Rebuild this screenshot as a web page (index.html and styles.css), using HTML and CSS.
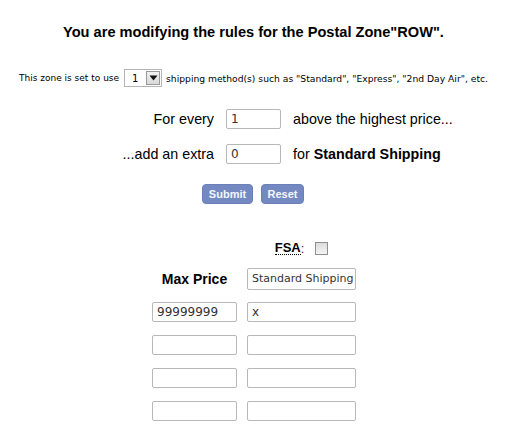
FILE: index.html
```html
<!DOCTYPE html>
<html>
<head>
<meta charset="utf-8">
<link rel="stylesheet" href="styles.css">
</head>
<body>
<h3 class="title">You are modifying the rules for the Postal Zone"ROW".</h3>
<p class="methods">This zone is set to use <span class="select"><span class="select-val">1</span><span class="select-btn"><svg width="9" height="6" viewBox="0 0 9 6"><path d="M0.5 0.5h8L4.5 5.5z" fill="#111"/></svg></span></span> <span class="methods-rest">shipping method(s) such as "Standard", "Express", "2nd Day Air", etc.</span></p>
<div class="rule">
  <span class="rule-label">For every</span>
  <span class="field small">1</span>
  <span class="rule-text">above the highest price...</span>
  <span class="rule-label">...add an extra</span>
  <span class="field small">0</span>
  <span class="rule-text">for <b>Standard Shipping</b></span>
</div>
<div class="buttons">
  <span class="btn">Submit</span>
  <span class="btn">Reset</span>
</div>
<div class="prices">
  <span></span>
  <span class="fsa"><abbr>FSA</abbr><span class="colon">:</span> <span class="check"></span></span>
  <span class="head">Max Price</span>
  <span class="field wide header-field">Standard Shipping</span>
  <span class="field">99999999</span>
  <span class="field wide">x</span>
  <span class="field"></span>
  <span class="field wide"></span>
  <span class="field"></span>
  <span class="field wide"></span>
  <span class="field"></span>
  <span class="field wide"></span>
</div>
</body>
</html>
```
FILE: styles.css
```css
body {
  margin: 8px;
  font-family: "Liberation Sans", Arial, sans-serif;
  color: #000;
  background: #fff;
}
.title {
  margin: 18px 0 0;
  padding-right: 20px;
  text-align: center;
  font-size: 14.6px;
  font-weight: bold;
  line-height: 12px;
}
.methods {
  margin: 31px 0 0;
  display: flex;
  align-items: center;
  justify-content: center;
  font-family: "DejaVu Sans", Tahoma, sans-serif;
  font-size: 9px;
  height: 18px;
  padding-right: 20px;
}
.methods-rest { font-size: 9.2px; }
.select {
  display: inline-flex;
  width: 38px;
  height: 18px;
  box-sizing: border-box;
  border: 1px solid #b5b5b5;
  margin: 0 4px 0 5px;
  background: #fff;
}
.select-val {
  flex: 1;
  display: flex;
  align-items: center;
  justify-content: center;
  font-size: 10px;
}
.select-btn {
  width: 14px;
  margin: 1px;
  box-sizing: border-box;
  border: 1px solid #9a9a9a;
  background: linear-gradient(#f2f2f2, #d9d9d9);
  display: flex;
  align-items: center;
  justify-content: center;
}
.rule {
  display: grid;
  grid-template-columns: 206px 55px auto;
  column-gap: 12px;
  row-gap: 15px;
  align-items: center;
  margin-top: 22px;
  font-size: 14.3px;
}
.rule-label { text-align: right; }
.field {
  box-sizing: border-box;
  height: 20px;
  border: 1px solid #b8b8b8;
  border-radius: 2px;
  background: #fff;
  font-family: "DejaVu Sans", Tahoma, sans-serif;
  font-size: 12px;
  padding: 0 4px;
  line-height: 18px;
  color: #333;
  white-space: nowrap;
  overflow: hidden;
}
.buttons {
  display: flex;
  justify-content: center;
  gap: 8px;
  margin-top: 20px;
  padding-right: 21px;
}
.btn {
  width: 51px;
  height: 20px;
  box-sizing: border-box;
  border: 1px solid #6a80b8;
  border-radius: 4px;
  background: #7489c2;
  color: #f4f6fb;
  font-size: 11px;
  font-weight: bold;
  display: flex;
  align-items: center;
  justify-content: center;
}
.btn + .btn { width: 43px; }
.prices {
  display: grid;
  grid-template-columns: 85px 109px;
  column-gap: 10px;
  justify-content: start;
  margin: 36px 0 0 144px;
  row-gap: 13px;
}
.fsa {
  justify-self: center;
  display: flex;
  align-items: center;
  font-size: 13px;
  font-weight: bold;
  height: 16px;
  margin-bottom: -1px;
}
.fsa .colon { font-weight: normal; color: #333; }
.fsa abbr {
  text-decoration: none;
  border-bottom: 1px dotted #000;
  line-height: 13px;
}
.fsa .check {
  display: inline-block;
  width: 11px;
  height: 11px;
  border: 1px solid #8f8f8f;
  background: linear-gradient(#dcdcdc, #f4f4f4);
  margin-left: 11px;
  font-weight: normal;
}
.head {
  justify-self: center;
  align-self: center;
  font-size: 14px;
  font-weight: bold;
}
.header-field { height: 22px; line-height: 20px; font-size: 11px; margin-bottom: -1px; }
.field.small { width: 55px; }
```
